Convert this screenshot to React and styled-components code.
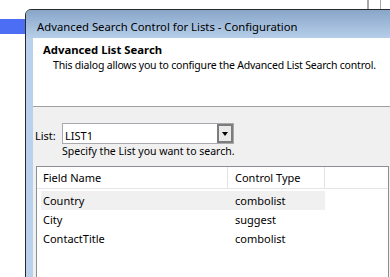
import React from "react";
import styled, { createGlobalStyle } from "styled-components";

const Global = createGlobalStyle`
  html, body { margin: 0; padding: 0; background: #ffffff; }
  body { font-family: "Noto Sans", "Open Sans", sans-serif; font-size: 11px; color: #000; overflow: hidden; }
  #root { width: 390px; height: 277px; }
`;

const Desktop = styled.div`
  position: relative;
  width: 390px;
  height: 277px;
  overflow: hidden;
  background: #ffffff;
`;

const BlueBar = styled.div`
  position: absolute;
  left: 0;
  top: 19px;
  width: 26px;
  height: 15px;
  background: #4b6ef5;
`;

const BackEdge = styled.div`
  position: absolute;
  top: 0;
  left: ${(p) => p.$x}px;
  width: ${(p) => p.$w}px;
  height: 10px;
  background: #a8a8a8;
`;

const Window = styled.div`
  position: absolute;
  left: 25px;
  top: 9px;
  width: 420px;
  height: 300px;
  border: 1px solid #2b2b2b;
  border-top-left-radius: 6px;
  background: #b9d1ea;
  display: flex;
  flex-direction: column;
  box-sizing: border-box;
  overflow: hidden;
`;

const TitleBar = styled.div`
  height: 28px;
  box-sizing: border-box;
  padding: 9px 0 0 11px;
  line-height: 15px;
  font-size: 11.3px;
  background: linear-gradient(#88a6ca, #b6cee8);
  white-space: nowrap;
`;

const Client = styled.div`
  flex: 1;
  margin-left: 7px;
  background: #f0f0f0;
  display: flex;
  flex-direction: column;
`;

const Header = styled.div`
  height: 69px;
  box-sizing: border-box;
  background: #ffffff;
  border-bottom: 1px solid #a0a0a0;
  padding: 4px 0 0 10px;
  line-height: 15px;
`;

const HeaderTitle = styled.div`
  font-weight: bold;
  font-size: 11.3px;
`;

const HeaderText = styled.div`
  margin-top: 1px;
  padding-left: 10px;
  font-size: 10.5px;
  letter-spacing: -0.2px;
  white-space: nowrap;
`;

const Body = styled.div`
  padding: 16px 0 0 2px;
  display: flex;
  flex-direction: column;
`;

const FieldRow = styled.div`
  display: flex;
  align-items: flex-start;
`;

const Label = styled.div`
  width: 27px;
  padding-top: 5px;
  line-height: 15px;
`;

const ComboBlock = styled.div`
  display: flex;
  flex-direction: column;
`;

const Combo = styled.div`
  width: 172px;
  height: 21px;
  box-sizing: border-box;
  border: 1px solid #a7a9ae;
  background: #ffffff;
  display: flex;
  align-items: stretch;
`;

const ComboText = styled.div`
  flex: 1;
  padding: 4px 0 0 2px;
  line-height: 15px;
`;

const ComboButton = styled.div`
  width: 16px;
  box-sizing: border-box;
  border: 2px solid #7c7c7c;
  background: #e9e9e9;
  display: flex;
  align-items: center;
  justify-content: center;
`;

const Arrow = styled.div`
  width: 0;
  height: 0;
  border-left: 3.5px solid transparent;
  border-right: 3.5px solid transparent;
  border-top: 4px solid #000;
`;

const Hint = styled.div`
  line-height: 15px;
  font-size: 10.5px;
  white-space: nowrap;
`;

const ListView = styled.div`
  margin: 7px 0 0 1px;
  width: 353px;
  height: 120px;
  box-sizing: border-box;
  border: 1px solid #8b8e93;
  border-bottom: none;
  background: #ffffff;
  display: flex;
  flex-direction: column;
`;

const ListHeader = styled.div`
  display: grid;
  grid-template-columns: 191px 97px 1fr;
  height: 22px;
  box-sizing: border-box;
  border-bottom: 1px solid #e5e5e5;
`;

const HeaderCell = styled.div`
  padding: 3px 0 0 ${(p) => p.$pad}px;
  line-height: 15px;
  border-right: ${(p) => (p.$last ? "none" : "1px solid #e3e3e3")};
  white-space: nowrap;
`;

const Rows = styled.div`
  padding: 2px 0 0 4px;
  display: flex;
  flex-direction: column;
`;

const Row = styled.div`
  display: grid;
  grid-template-columns: 187px 97px;
  height: 19px;
  background: ${(p) => (p.$selected ? "#f0f0f0" : "transparent")};
  width: 284px;
`;

const Cell = styled.div`
  padding: 2px 0 0 ${(p) => p.$pad}px;
  line-height: 15px;
  white-space: nowrap;
`;

const rows = [
  { name: "Country", type: "combolist", selected: true },
  { name: "City", type: "suggest" },
  { name: "ContactTitle", type: "combolist" },
];

export default function App() {
  return (
    <Desktop>
      <Global />
      <BlueBar />
      <BackEdge $x={367} $w={2} />
      <BackEdge $x={380} $w={1} />
      <Window>
        <TitleBar>Advanced Search Control for Lists - Configuration</TitleBar>
        <Client>
          <Header>
            <HeaderTitle>Advanced List Search</HeaderTitle>
            <HeaderText>This dialog allows you to configure the Advanced List Search control.</HeaderText>
          </Header>
          <Body>
            <FieldRow>
              <Label>List:</Label>
              <ComboBlock>
                <Combo>
                  <ComboText>LIST1</ComboText>
                  <ComboButton>
                    <Arrow />
                  </ComboButton>
                </Combo>
                <Hint>Specify the List you want to search.</Hint>
              </ComboBlock>
            </FieldRow>
            <ListView>
              <ListHeader>
                <HeaderCell $pad={6}>Field Name</HeaderCell>
                <HeaderCell $pad={7}>Control Type</HeaderCell>
                <HeaderCell $pad={0} $last />
              </ListHeader>
              <Rows>
                {rows.map((r) => (
                  <Row key={r.name} $selected={r.selected}>
                    <Cell $pad={2}>{r.name}</Cell>
                    <Cell $pad={7}>{r.type}</Cell>
                  </Row>
                ))}
              </Rows>
            </ListView>
          </Body>
        </Client>
      </Window>
    </Desktop>
  );
}
